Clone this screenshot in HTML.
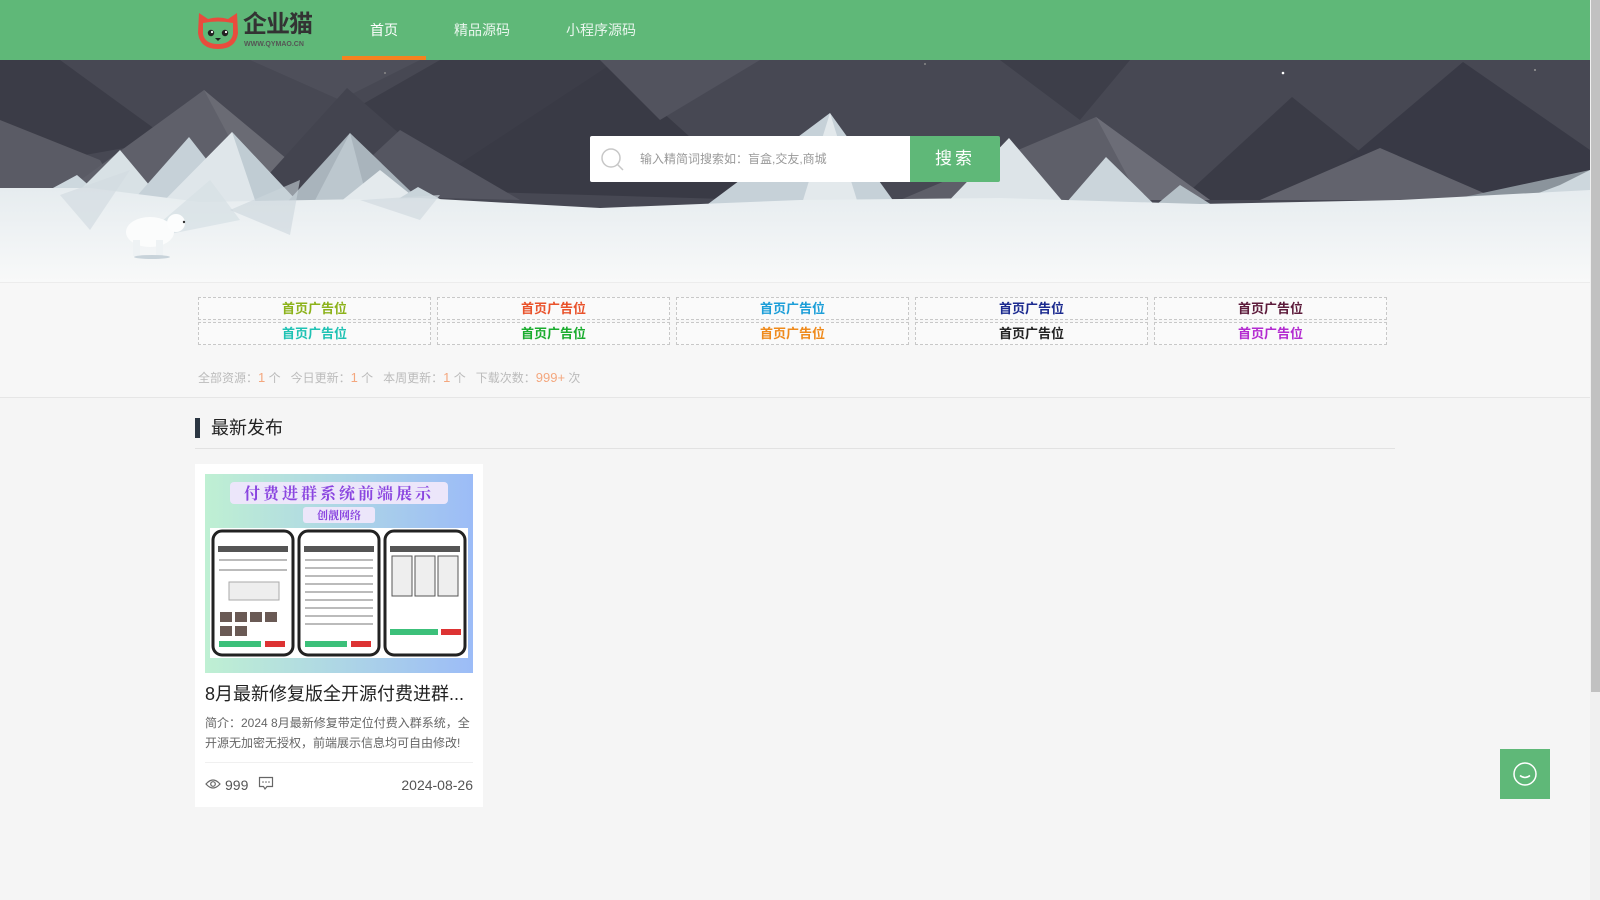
<!DOCTYPE html>
<html><head><meta charset="utf-8">
<style>
*{margin:0;padding:0;box-sizing:border-box}
body{width:1600px;height:900px;overflow:hidden;background:#f5f5f5;font-family:"Liberation Sans","Noto Sans CJK SC",sans-serif;position:relative}
.abs{position:absolute}
#hdr{left:0;top:0;width:1590px;height:60px;background:#5fb878}
.nav{top:0;height:60px;line-height:60px;color:#fff;font-size:14px}
#banner{left:0;top:60px;width:1590px;height:222px;overflow:hidden}
#band{left:0;top:282px;width:1590px;height:116px;background:#f7f7f7;border-bottom:1px solid #e6e6e6;border-top:1px solid #ececec}
.ad{position:absolute;height:23px;border:1px dashed #c8c8c8;font-size:13px;font-weight:bold;text-align:center;line-height:21px;background:#fafafa}
.stat{font-size:12px;color:#bbb}
.stat b{font-weight:normal;color:#f4a77e;font-size:13px}
#scroll{left:1590px;top:0;width:10px;height:900px;background:#f0f0f0}
#thumb{left:1591px;top:0;width:9px;height:692px;background:#c1c1c1}
</style></head><body>
<div id="hdr" class="abs"></div>
<svg class="abs" style="left:196px;top:11px" width="44" height="40" viewBox="0 0 44 40">
<path d="M3 2 L12 8 Q22 5 32 8 L41 2 L42 22 Q40 38 22 38 Q4 38 2 22 Z" fill="#e84c3d"/>
<path d="M7 12 Q22 9 37 12 L37 23 Q35 33 22 33 Q9 33 7 23 Z" fill="#5fb878"/>
<circle cx="15" cy="22" r="3.2" fill="#222"/><circle cx="29" cy="22" r="3.2" fill="#222"/>
<circle cx="16" cy="21" r="1.1" fill="#fff"/><circle cx="30" cy="21" r="1.1" fill="#fff"/>
<path d="M19 27 L25 27 L22 30 Z" fill="#222"/>
</svg>
<div class="abs" style="left:243px;top:11px;font-size:24px;font-weight:bold;color:#333;letter-spacing:-1px;line-height:28px">企业猫</div>
<div class="abs" style="left:244px;top:41px;font-size:7px;color:#555;font-weight:bold;line-height:8px">WWW.QYMAO.CN</div>
<div class="abs nav" style="left:370px">首页</div>
<div class="abs" style="left:342px;top:56px;width:84px;height:4px;background:#f5821f"></div>
<div class="abs nav" style="left:454px;color:#eaf6ee">精品源码</div>
<div class="abs nav" style="left:566px;color:#eaf6ee">小程序源码</div>

<div id="banner" class="abs">
<svg width="1590" height="222" viewBox="0 0 1590 222">
<defs><linearGradient id="sn" x1="0" y1="0" x2="0" y2="1"><stop offset="0" stop-color="#e6ecef"/><stop offset="1" stop-color="#f8f9f9"/></linearGradient></defs>
<rect width="1590" height="222" fill="#474853"/>
<polygon points="0,0 60,0 170,80 0,110" fill="#3b3c47"/>
<polygon points="250,0 420,0 340,40" fill="#4e4f5a"/>
<polygon points="300,80 440,0 620,0 520,120" fill="#3c3d48"/>
<polygon points="420,130 610,5 760,140" fill="#393a45"/>
<polygon points="600,0 760,0 660,60" fill="#52535e"/>
<polygon points="1000,0 1130,0 1080,60" fill="#3d3e49"/>
<polygon points="1180,140 1292,37 1420,140" fill="#3a3b46"/>
<polygon points="1300,140 1463,2 1590,90 1590,140" fill="#383945"/>
<polygon points="0,60 100,100 120,135 0,140" fill="#5a5b65"/>
<polygon points="60,135 204,30 330,135" fill="#5f606a"/>
<polygon points="204,30 330,135 260,135" fill="#6a6b74"/>
<polygon points="250,135 347,28 470,135" fill="#43444f"/>
<polygon points="330,135 400,70 520,140" fill="#555661"/>
<polygon points="900,140 1096,57 1210,140" fill="#5e5f69"/>
<polygon points="1096,57 1210,140 1140,140" fill="#6c6d77"/>
<polygon points="1260,140 1380,88 1500,140" fill="#62636d"/>
<polygon points="1450,140 1590,110 1590,140" fill="#8b949c"/>
<!-- snow peaks -->
<polygon points="40,135 77,115 100,135" fill="#cdd8de"/>
<polygon points="60,150 120,90 170,150" fill="#d8e1e5"/>
<polygon points="120,155 189,77 250,155" fill="#c6d1d8"/>
<polygon points="150,155 232,72 310,155" fill="#dfe6ea"/>
<polygon points="232,72 310,155 260,155" fill="#c0ccd3"/>
<polygon points="280,150 350,73 430,150" fill="#a9b4bc"/>
<polygon points="310,150 350,73 370,150" fill="#bcc7ce"/>
<polygon points="330,150 380,110 430,150" fill="#e4eaed"/>
<polygon points="380,150 418,127 460,150" fill="#c9d4da"/>
<polygon points="700,150 830,53 900,150" fill="#c6d1d8"/>
<polygon points="800,150 830,53 860,150" fill="#e3e9ec"/>
<polygon points="940,150 1009,78 1070,150" fill="#dde4e8"/>
<polygon points="1060,150 1106,97 1160,150" fill="#cbd5db"/>
<polygon points="1150,150 1180,125 1220,150" fill="#b5c0c7"/>
<polygon points="1520,140 1560,125 1590,110 1590,150" fill="#cdd7dd"/>
<path d="M0 128 L90 128 L200 142 L420 138 L600 148 L800 140 L1000 138 L1200 144 L1400 140 L1590 130 L1590 222 L0 222 Z" fill="url(#sn)"/>
<polygon points="60,135 130,110 90,170" fill="#d3dce1" opacity=".7"/>
<polygon points="140,180 210,120 240,160" fill="#d6dfe4" opacity=".7"/>
<polygon points="230,150 300,120 290,175" fill="#ccd6dc" opacity=".6"/>
<polygon points="360,140 440,135 420,160" fill="#d1dadf" opacity=".7"/>
<!-- bear -->
<ellipse cx="150" cy="172" rx="24" ry="15" fill="#fbfcfc"/>
<circle cx="176" cy="163" r="9" fill="#fcfdfd"/>
<rect x="133" y="180" width="7" height="16" fill="#eef2f4"/>
<rect x="156" y="180" width="7" height="16" fill="#eef2f4"/>
<ellipse cx="152" cy="197" rx="18" ry="2" fill="#c8d3da"/>
<circle cx="184" cy="162" r="1.2" fill="#333"/>
<circle cx="385" cy="13" r="1" fill="#888"/><circle cx="925" cy="4" r="1" fill="#888"/>
<circle cx="1283" cy="13" r="1.3" fill="#fff"/><circle cx="1535" cy="10" r="1" fill="#999"/>
</svg>
</div>
<div class="abs" style="left:590px;top:136px;width:320px;height:46px;background:#fff;border-radius:2px 0 0 2px"></div>
<svg class="abs" style="left:600px;top:147px" width="26" height="26" viewBox="0 0 26 26"><circle cx="11" cy="11" r="9" fill="none" stroke="#c7c7c7" stroke-width="1.5"/><path d="M17 17 L23 23" stroke="#c7c7c7" stroke-width="1.5"/></svg>
<div class="abs" style="left:640px;top:151px;font-size:12px;color:#999;line-height:16px">输入精简词搜索如：盲盒,交友,商城</div>
<div class="abs" style="left:910px;top:136px;width:90px;height:46px;background:#5fb878;color:#fff;font-size:17px;text-align:center;line-height:46px;letter-spacing:3px;border-radius:0 2px 2px 0">搜索</div>

<div id="band" class="abs"></div>
<div class="ad" style="left:198px;top:297px;width:233px;color:#8cb21a">首页广告位</div>
<div class="ad" style="left:437px;top:297px;width:233px;color:#e9522b">首页广告位</div>
<div class="ad" style="left:676px;top:297px;width:233px;color:#1c9ed8">首页广告位</div>
<div class="ad" style="left:915px;top:297px;width:233px;color:#1b2a8f">首页广告位</div>
<div class="ad" style="left:1154px;top:297px;width:233px;color:#5c1a3a">首页广告位</div>
<div class="ad" style="left:198px;top:322px;width:233px;color:#1fc2b4">首页广告位</div>
<div class="ad" style="left:437px;top:322px;width:233px;color:#1aac2e">首页广告位</div>
<div class="ad" style="left:676px;top:322px;width:233px;color:#ef8a1b">首页广告位</div>
<div class="ad" style="left:915px;top:322px;width:233px;color:#222">首页广告位</div>
<div class="ad" style="left:1154px;top:322px;width:233px;color:#b32ad0">首页广告位</div>
<div class="abs stat" style="left:198px;top:370px;line-height:16px">全部资源：<b>1</b> 个 &nbsp; 今日更新：<b>1</b> 个 &nbsp; 本周更新：<b>1</b> 个 &nbsp; 下载次数：<b>999+</b> 次</div>

<div class="abs" style="left:195px;top:418px;width:5px;height:20px;background:#2b3642"></div>
<div class="abs" style="left:211px;top:417px;font-size:18px;color:#222;line-height:22px">最新发布</div>
<div class="abs" style="left:195px;top:448px;width:1200px;height:1px;background:#e2e2e2"></div>

<div class="abs" style="left:195px;top:464px;width:288px;height:343px;background:#fff"></div>
<svg class="abs" style="left:205px;top:474px" width="268" height="199" viewBox="0 0 268 199">
<defs><linearGradient id="cg" x1="0" x2="1"><stop offset="0" stop-color="#bff0d3"/><stop offset="1" stop-color="#9cbcf7"/></linearGradient></defs>
<rect width="268" height="199" fill="url(#cg)"/>
<rect x="25" y="8" width="218" height="22" rx="4" fill="#ece6fa"/>
<text x="134" y="25" text-anchor="middle" font-size="16" font-weight="bold" fill="#8a45e0" font-family="Noto Serif CJK SC,serif" letter-spacing="3">付费进群系统前端展示</text>
<rect x="98" y="33" width="72" height="16" rx="3" fill="#ece6fa"/>
<text x="134" y="45" text-anchor="middle" font-size="11" font-weight="bold" fill="#8a45e0" font-family="Noto Serif CJK SC,serif">创靓网络</text>
<rect x="5" y="54" width="258" height="130" fill="#fff"/>
<rect x="8" y="57" width="80" height="124" rx="9" fill="#fff" stroke="#222" stroke-width="3"/>
<rect x="94" y="57" width="80" height="124" rx="9" fill="#fff" stroke="#222" stroke-width="3"/>
<rect x="180" y="57" width="80" height="124" rx="9" fill="#fff" stroke="#222" stroke-width="3"/>
<g fill="#bbb"><rect x="14" y="85" width="68" height="2"/><rect x="14" y="95" width="68" height="2"/><rect x="100" y="85" width="68" height="2"/><rect x="100" y="93" width="68" height="2"/><rect x="100" y="101" width="68" height="2"/><rect x="100" y="109" width="68" height="2"/><rect x="100" y="117" width="68" height="2"/><rect x="100" y="125" width="68" height="2"/><rect x="100" y="133" width="68" height="2"/><rect x="100" y="141" width="68" height="2"/><rect x="100" y="149" width="68" height="2"/></g>
<rect x="13" y="72" width="70" height="6" fill="#555"/><rect x="99" y="72" width="70" height="6" fill="#555"/><rect x="185" y="72" width="70" height="6" fill="#555"/>
<g fill="#6a5a55"><rect x="15" y="138" width="12" height="10"/><rect x="30" y="138" width="12" height="10"/><rect x="45" y="138" width="12" height="10"/><rect x="60" y="138" width="12" height="10"/><rect x="15" y="152" width="12" height="10"/><rect x="30" y="152" width="12" height="10"/></g>
<rect x="24" y="108" width="50" height="18" fill="#eee" stroke="#aaa"/>
<rect x="14" y="167" width="42" height="6" fill="#3cc07a"/><rect x="60" y="167" width="20" height="6" fill="#d33"/>
<rect x="100" y="167" width="42" height="6" fill="#3cc07a"/><rect x="146" y="167" width="20" height="6" fill="#d33"/>
<rect x="187" y="82" width="20" height="40" fill="#eee" stroke="#555"/><rect x="210" y="82" width="20" height="40" fill="#eee" stroke="#555"/><rect x="233" y="82" width="20" height="40" fill="#eee" stroke="#555"/>
<rect x="185" y="155" width="48" height="6" fill="#3cc07a"/><rect x="236" y="155" width="20" height="6" fill="#d33"/>
</svg>
<div class="abs" style="left:205px;top:682px;font-size:18px;color:#222;line-height:24px;width:268px;white-space:nowrap;overflow:hidden">8月最新修复版全开源付费进群...</div>
<div class="abs" style="left:205px;top:713px;width:270px;font-size:12px;color:#666;line-height:20px">简介：2024 8月最新修复带定位付费入群系统，全开源无加密无授权，前端展示信息均可自由修改!</div>
<div class="abs" style="left:205px;top:762px;width:268px;height:1px;background:#f0f0f0"></div>
<svg class="abs" style="left:205px;top:777px" width="16" height="14" viewBox="0 0 16 14"><path d="M1 7 Q8 -1 15 7 Q8 15 1 7 Z" fill="none" stroke="#666" stroke-width="1.2"/><circle cx="8" cy="7" r="2.3" fill="none" stroke="#666" stroke-width="1.2"/></svg>
<div class="abs" style="left:225px;top:776px;font-size:14px;color:#555;line-height:18px">999</div>
<svg class="abs" style="left:258px;top:776px" width="16" height="15" viewBox="0 0 16 15"><path d="M1.5 1.5 H14.5 V10.5 H9 L7 13 L5.5 10.5 H1.5 Z" fill="none" stroke="#666" stroke-width="1.2"/><circle cx="5" cy="6" r=".8" fill="#666"/><circle cx="8" cy="6" r=".8" fill="#666"/><circle cx="11" cy="6" r=".8" fill="#666"/></svg>
<div class="abs" style="left:380px;top:776px;width:93px;text-align:right;font-size:14px;color:#555;line-height:18px">2024-08-26</div>

<div class="abs" style="left:1500px;top:749px;width:50px;height:50px;background:#5fb878"></div>
<svg class="abs" style="left:1511px;top:760px" width="28" height="28" viewBox="0 0 28 28"><circle cx="14" cy="14" r="11" fill="none" stroke="#fff" stroke-width="1.5"/><path d="M9 15.5 Q14 19.5 19 15.5" fill="none" stroke="#fff" stroke-width="1.5"/></svg>

<div id="scroll" class="abs"></div>
<div id="thumb" class="abs"></div>
</body></html>
